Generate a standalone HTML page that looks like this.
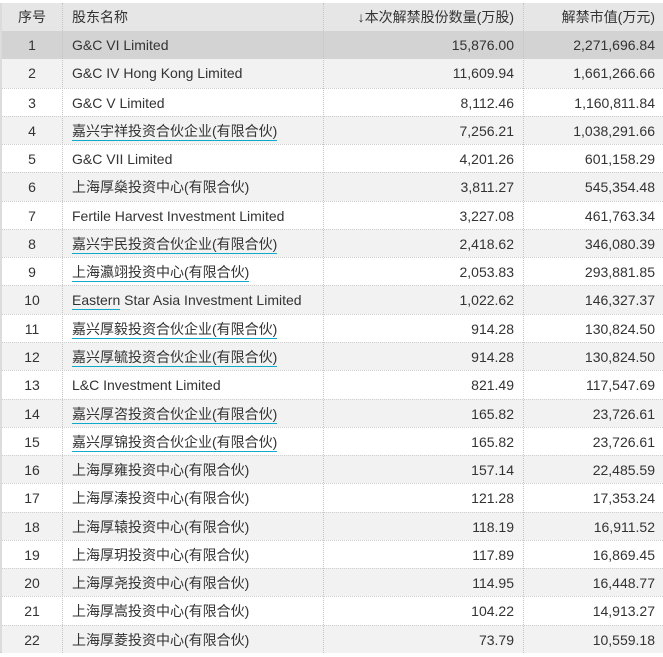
<!DOCTYPE html>
<html><head><meta charset="utf-8"><style>
body{margin:0;background:#fff;width:663px;height:657px;overflow:hidden;font-family:"Liberation Sans","Noto Sans CJK SC",sans-serif;font-size:14px;color:#333}
.r{position:absolute;left:2px;width:661px;height:28.27px;line-height:28px;box-sizing:border-box}
.r div{position:absolute;top:0;height:100%;white-space:nowrap}
.c1{left:0;width:60px;text-align:center}
.c2{left:70px}
.c3{left:321px;width:191px;text-align:right}
.c4{left:521px;width:132px;text-align:right}
.vl{position:absolute;top:3px;height:650px;border-left:1px dotted #c4c4c4}
.g{background:#f2f2f2}
.h{background:#e6e6e6;height:28px;top:3px}
.s{background:#d3d3d3}
.d{border-top:1px dotted #cfcfcf}
u{text-decoration:none;border-bottom:1.5px solid #11a8c9;padding-bottom:1px}
</style></head><body>
<div style="position:absolute;left:0;top:3px;width:2px;height:650px;background:#dcdcdc"></div>
<div style="position:absolute;left:0;top:652px;width:663px;height:1px;background:#d0d0d0"></div>
<div id="t"></div>
<div class="vl" style="left:62px"></div>
<div class="vl" style="left:323px"></div>
<div class="vl" style="left:523px"></div>
<script>
var d=[["G&C VI Limited","15,876.00","2,271,696.84",0],["G&C IV Hong Kong Limited","11,609.94","1,661,266.66",0],["G&C V Limited","8,112.46","1,160,811.84",0],["嘉兴宇祥投资合伙企业(有限合伙)","7,256.21","1,038,291.66",1],["G&C VII Limited","4,201.26","601,158.29",0],["上海厚燊投资中心(有限合伙)","3,811.27","545,354.48",0],["Fertile Harvest Investment Limited","3,227.08","461,763.34",0],["嘉兴宇民投资合伙企业(有限合伙)","2,418.62","346,080.39",1],["上海瀛翊投资中心(有限合伙)","2,053.83","293,881.85",1],["Eastern Star Asia Investment Limited","1,022.62","146,327.37",2],["嘉兴厚毅投资合伙企业(有限合伙)","914.28","130,824.50",1],["嘉兴厚毓投资合伙企业(有限合伙)","914.28","130,824.50",1],["L&C Investment Limited","821.49","117,547.69",0],["嘉兴厚咨投资合伙企业(有限合伙)","165.82","23,726.61",1],["嘉兴厚锦投资合伙企业(有限合伙)","165.82","23,726.61",1],["上海厚雍投资中心(有限合伙)","157.14","22,485.59",0],["上海厚溱投资中心(有限合伙)","121.28","17,353.24",0],["上海厚辕投资中心(有限合伙)","118.19","16,911.52",0],["上海厚玥投资中心(有限合伙)","117.89","16,869.45",0],["上海厚尧投资中心(有限合伙)","114.95","16,448.77",0],["上海厚嵩投资中心(有限合伙)","104.22","14,913.27",0],["上海厚菱投资中心(有限合伙)","73.79","10,559.18",0]];
var h='<div class="r h"><div class="c1">序号</div><div class="c2">股东名称</div><div class="c3">↓本次解禁股份数量(万股)</div><div class="c4">解禁市值(万元)</div></div>';
d.forEach(function(r,i){var top=31+i*28.27;var cls='r'+(i==0?' s':(i%2?' g':''))+(i>=2?' d':'');
var n=r[3]==1?'<u>'+r[0]+'</u>':(r[3]==2?'<u>Eastern</u> Star Asia Investment Limited':r[0]);
h+='<div class="'+cls+'" style="top:'+top+'px"><div class="c1">'+(i+1)+'</div><div class="c2">'+n+'</div><div class="c3">'+r[1]+'</div><div class="c4">'+r[2]+'</div></div>';});
document.getElementById('t').innerHTML=h;
</script>
</body></html>
